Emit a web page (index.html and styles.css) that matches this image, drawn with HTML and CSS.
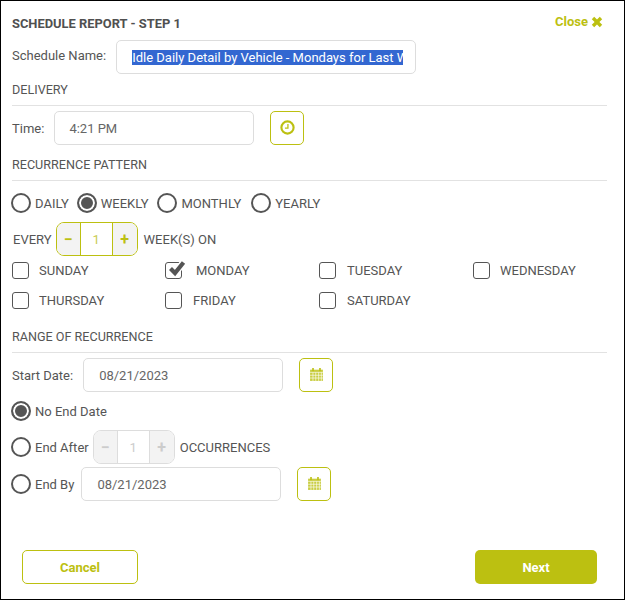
FILE: index.html
```html
<!DOCTYPE html>
<html lang="en">
<head>
<meta charset="utf-8">
<title>Schedule Report</title>
<link rel="stylesheet" href="styles.css">
</head>
<body>
<main class="dialog">
  <header class="head">
    <h1 class="title">SCHEDULE REPORT - STEP 1</h1>
    <a class="close">Close <svg class="close-x" viewBox="0 0 12 12"><path d="M0.800 3.200 3.200 0.800 6 3.600 8.800 0.800 11.200 3.200 8.400 6 11.200 8.800 8.800 11.200 6 8.400 3.200 11.200 0.800 8.800 3.600 6z"/></svg></a>
  </header>

  <div class="row name-row">
    <span class="label">Schedule Name:</span>
    <div class="field name-field"><span class="clip"><span class="selected">Idle Daily Detail by Vehicle - Mondays for Last Week</span></span></div>
  </div>

  <h2 class="section s-delivery">DELIVERY</h2>
  <div class="row time-row">
    <span class="label">Time:</span>
    <div class="field w200 gap-time">4:21 PM</div>
    <button class="icon-btn"><svg viewBox="0 0 14 14" class="ico"><circle cx="7" cy="7" r="5.700" fill="none" stroke="currentColor" stroke-width="2"/><path d="M7.400 3.800V7.600H4.600" fill="none" stroke="currentColor" stroke-width="1.200"/></svg></button>
  </div>

  <h2 class="section s-recur">RECURRENCE PATTERN</h2>
  <div class="row radios">
    <label class="radio-item first"><span class="radio"></span>DAILY</label>
    <label class="radio-item"><span class="radio on"></span>WEEKLY</label>
    <label class="radio-item third"><span class="radio"></span>MONTHLY</label>
    <label class="radio-item"><span class="radio"></span>YEARLY</label>
  </div>
  <div class="row every-row">
    <span class="every">EVERY</span>
    <div class="stepper"><span class="step">&minus;</span><span class="step-val">1</span><span class="step">+</span></div>
    <span>WEEK(S) ON</span>
  </div>
  <div class="days">
    <label class="day"><span class="check"></span>SUNDAY</label>
    <label class="day monday"><span class="check"><svg viewBox="0 0 20 20" class="tick"><path d="M4.500 9.500 9 14 17.500 3.500" fill="none" stroke="#fff" stroke-width="7"/><path d="M4.500 9.500 9 14 17.500 3.500" fill="none" stroke="#555" stroke-width="4.200"/></svg></span>MONDAY</label>
    <label class="day mid"><span class="check"></span>TUESDAY</label>
    <label class="day"><span class="check"></span>WEDNESDAY</label>
    <label class="day"><span class="check"></span>THURSDAY</label>
    <label class="day mid"><span class="check"></span>FRIDAY</label>
    <label class="day mid"><span class="check"></span>SATURDAY</label>
  </div>

  <h2 class="section s-range">RANGE OF RECURRENCE</h2>
  <div class="row time-row">
    <span class="label">Start Date:</span>
    <div class="field w200 gap-start">08/21/2023</div>
    <button class="icon-btn"><svg viewBox="0 0 14 14" class="ico"><use href="#cal"/></svg></button>
  </div>
  <div class="row no-end">
    <label class="radio-item"><span class="radio on"></span>No End Date</label>
  </div>
  <div class="row end-after">
    <label class="radio-item"><span class="radio"></span>End After</label>
    <div class="stepper off"><span class="step">&minus;</span><span class="step-val">1</span><span class="step">+</span></div>
    <span>OCCURRENCES</span>
  </div>
  <div class="row end-by">
    <label class="radio-item"><span class="radio"></span>End By</label>
    <div class="field w200 gap-endby">08/21/2023</div>
    <button class="icon-btn"><svg viewBox="0 0 14 14" class="ico"><use href="#cal"/></svg></button>
  </div>

  <footer class="foot">
    <button class="btn ghost">Cancel</button>
    <button class="btn solid">Next</button>
  </footer>
</main>
<svg class="defs" width="0" height="0"><defs><g id="cal"><path d="M1 2.500H13V13H1z" fill="currentColor" opacity=".8"/><path d="M3 1h1.500v3H3zM9.500 1H11v3H9.500z" fill="currentColor"/><path d="M1 5h12M1 7.700h12M1 10.300h12M3.700 5v8M6.300 5v8M9 5v8M11.500 5v8" stroke="#fff" stroke-width=".6" fill="none"/></g></defs></svg>
</body>
</html>
```
FILE: styles.css
```css
* { box-sizing: border-box; }
html, body { margin: 0; padding: 0; background: #fff; }
body { width: 625px; height: 600px; overflow: hidden; font-family: Roboto, sans-serif; font-size: 13px; color: #555; }
.defs { display: block; }
.dialog { width: 625px; height: 600px; border: 1px solid #000; padding: 0 17px 0 11px; display: flex; flex-direction: column; }
.head { display: flex; justify-content: space-between; height: 39px; padding-top: 15px; }
.title { margin: 0; font-size: 12.900px; font-weight: 700; line-height: 15px; color: #505050; }
.close { font-size: 13px; font-weight: 700; color: #bcc011; line-height: 14px; margin-top: -1px; margin-right: 4px; display: flex; align-items: center; gap: 3px; height: 14px; }
.close-x { width: 12px; height: 12px; fill: #bcc011; }
.row { display: flex; align-items: center; }
.label { flex: none; }
.field { height: 34px; border: 1px solid #ddd; border-radius: 5px; background: #fff; display: flex; align-items: center; font-size: 13px; color: #666; padding-left: 15px; flex: none; }
.name-row { height: 34px; }
.name-row .label { margin-top: -3px; }
.name-field { width: 300px; margin-left: 10px; }
.clip { display: block; width: 271px; overflow: hidden; white-space: nowrap; }
.selected { background: #3367d1; color: #fff; font-size: 13px; display: inline-block; line-height: 15px; }
.section { margin: 0; font-size: 12.600px; font-weight: 400; color: #555; line-height: 15px; border-bottom: 1px solid #e2e2e2; }
.s-delivery { padding-top: 8px; height: 32px; }
.s-recur { padding-top: 12px; height: 36px; }
.s-range { padding-top: 14px; height: 38px; }
.time-row { height: 34px; margin-top: 5px; }
.w200 { width: 200px; }
.gap-time { margin-left: 10px; padding-left: 14px; }
.gap-start { margin-left: 10px; }
.gap-endby { margin-left: 7px; }
.icon-btn { width: 34px; height: 34px; margin-left: 16px; border: 1px solid #bcc011; border-radius: 5px; background: #fff; color: #bcc011; padding: 0; display: flex; align-items: center; justify-content: center; flex: none; }
.ico { width: 15px; height: 15px; display: block; margin-bottom: 2px; }
.radios { margin-top: 11px; height: 22px; gap: 9px; margin-left: -1px; }
.radio-item { display: flex; align-items: center; gap: 4px; flex: none; }
.radio-item.first { margin-right: -1px; }
.radio-item.third { margin-right: 1px; }
.no-end, .end-after, .end-by { margin-left: -1px; }
.radio { width: 20px; height: 20px; border: 2px solid #555; border-radius: 50%; background: #fff; flex: none; display: block; }
.radio.on { background: #555; box-shadow: inset 0 0 0 2px #fff; }
.every-row { height: 34px; margin-top: 8px; }
.every { margin-left: 1px; margin-right: 4px; }
.stepper { width: 82px; height: 34px; border: 1px solid #bcc011; border-radius: 8px; display: flex; overflow: hidden; margin-right: 6px; flex: none; }
.step { width: 24px; background: #f3f3f3; color: #bcc011; font-weight: 700; font-size: 16px; display: flex; align-items: center; justify-content: center; flex: none; }
.step:first-child { width: 23px; }
.step-val { flex: 1; border-left: 1px solid #bcc011; border-right: 1px solid #bcc011; color: #c9cc55; display: flex; align-items: center; justify-content: center; font-size: 13px; }
.stepper.off { border-color: #ddd; margin-left: 4px; margin-right: 5px; }
.stepper.off .step { color: #ccc; }
.stepper.off .step-val { border-color: #ddd; color: #ccc; }
.days { display: grid; grid-template-columns: 153px 154px 154px 1fr; grid-auto-rows: 30px; margin-top: -1px; }
.day { display: flex; align-items: center; gap: 10px; }
.day.mid { gap: 11px; }
.day.monday { gap: 14px; }
.check { width: 17px; height: 17px; border: 1.500px solid #555; border-radius: 3px; display: block; position: relative; flex: none; }
.tick { position: absolute; left: 0; top: -4px; width: 20px; height: 20px; }
.no-end { height: 22px; margin-top: 8px; }
.end-after { height: 34px; margin-top: 8px; }
.end-by { height: 34px; margin-top: 3px; }
.foot { display: flex; justify-content: space-between; margin-top: auto; margin-bottom: 15px; padding-left: 10px; padding-right: 10px; }
.btn { height: 34px; border-radius: 5px; font-family: Roboto, sans-serif; font-size: 13px; font-weight: 700; padding: 0; }
.ghost { width: 116px; background: #fff; border: 1px solid #bcc011; color: #bcc011; }
.solid { width: 122px; background: #bcc011; border: 0; color: #fff; }
```
